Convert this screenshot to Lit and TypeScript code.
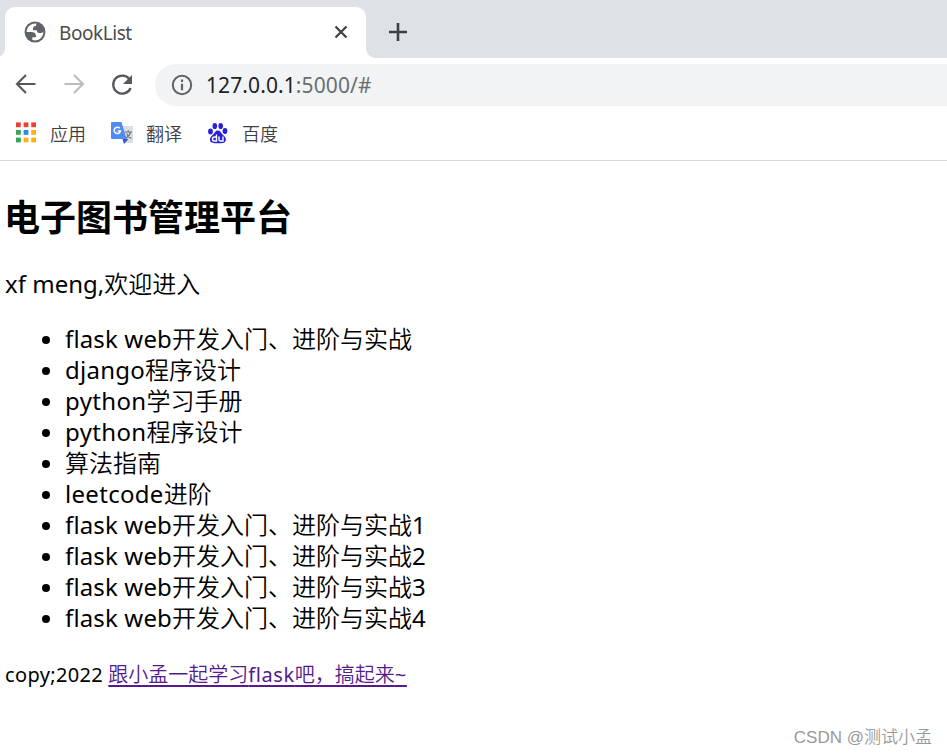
import { LitElement, html, css, svg } from "lit";
import { customElement } from "lit/decorators.js";
import { styleMap } from "lit/directives/style-map.js";

interface Book {
  latin: string;
  tracking: number;
  title: string;
  volume?: string;
}

const series = (volume?: string): Book => ({
  latin: "flask web",
  tracking: 0.15,
  title: "开发入门、进阶与实战",
  volume,
});

const books: Book[] = [
  series(),
  { latin: "django", tracking: 0.25, title: "程序设计" },
  { latin: "python", tracking: 0.35, title: "学习手册" },
  { latin: "python", tracking: 0.35, title: "程序设计" },
  { latin: "", tracking: 0, title: "算法指南" },
  { latin: "leetcode", tracking: 0.3, title: "进阶" },
  series("1"),
  series("2"),
  series("3"),
  series("4"),
];

const appColors = ["#e94235", "#e94235", "#e94235", "#34a853", "#2a8cf0", "#fbb313", "#34a853", "#fbb313", "#fbb313"];

@customElement("browser-chrome")
class BrowserChrome extends LitElement {
  static styles = css`
    :host { display: block; font-family: "Noto Sans", "Noto Sans CJK SC", sans-serif; font-weight: 400; color: #3c4043; }
    svg { display: block; flex: none; }
    .strip { height: 58px; background: #dee1e6; display: flex; align-items: flex-end; box-sizing: border-box; }
    .tab { position: relative; margin-left: 5px; width: 361px; height: 51px; background: #fff; border-radius: 10px 10px 0 0; display: flex; align-items: center; box-sizing: border-box; padding: 0 16px 2px 19px; }
    .tab::before, .tab::after { content: ""; position: absolute; bottom: 0; width: 10px; height: 10px; }
    .tab::before { left: -10px; background: radial-gradient(circle at 0 0, transparent 9.5px, #fff 10.5px); }
    .tab::after { right: -10px; background: radial-gradient(circle at 100% 0, transparent 9.5px, #fff 10.5px); }
    .name { flex: 1; margin-left: 13px; padding-top: 2px; font-size: 19px; letter-spacing: -0.45px; line-height: 24px; color: #4a4d51; }
    .plus { margin: 0 0 17px 22px; }
    .toolbar { height: 54px; display: flex; align-items: center; background: #fff; box-sizing: border-box; padding-left: 14px; }
    .reload { margin-left: 23px; }
    .fwd { margin-left: 24px; }
    .address { flex: 1; margin-left: 20px; height: 42px; background: #f1f3f4; border-radius: 21px 0 0 21px; display: flex; align-items: center; padding-left: 16px; }
    .url { margin-left: 13px; font-size: 21px; line-height: 30px; letter-spacing: 0.1px; color: #202124; white-space: nowrap; }
    .port { color: #6a6e73; }
    .bookmarks { height: 49px; border-bottom: 1px solid #d6d8da; box-sizing: border-box; display: flex; align-items: center; padding: 0 0 6px 15px; font-size: 18px; line-height: 26px; font-weight: 350; }
    .mark { display: flex; align-items: center; height: 42px; }
    .mark svg { margin-bottom: 1px; }
    .mark span { padding-top: 2px; }
    .apps span { margin-left: 13px; }
    .trans { margin-left: 24px; }
    .trans span { margin-left: 12px; }
    .baidu { margin-left: 25px; }
    .baidu span { margin-left: 13px; }
  `;

  render() {
    return html`
      <div class="strip">
        <div class="tab">
          <svg width="22" height="22" viewBox="1.5 1.5 21 21"><circle cx="12" cy="12" r="10" fill="#5f6368"/><path fill="#fff" d="M4 12h4.400c3.407.022 4.922 1.730 4.543 5.127H9.488v2.470a8.004 8.004 0 0 0 10.498-8.083C19.327 12.504 18.332 13 17 13c-2.137 0-3.206-.916-3.206-2.750h-3.748c-.274-2.728.683-4.092 2.870-4.092 0-.975.327-1.597.811-1.970A8.004 8.004 0 0 0 4 12z"/></svg>
          <div class="name">BookList</div>
          <svg width="18" height="18" viewBox="0 0 18 18"><path d="M3.500 3.500l11 11M14.500 3.500l-11 11" stroke="#3c4043" stroke-width="2.200"/></svg>
        </div>
        <svg class="plus" width="20" height="18" viewBox="0 0 20 18"><path d="M10 0v18M1 9h18" stroke="#3c4043" stroke-width="2.600"/></svg>
      </div>
      <div class="toolbar">
        <svg width="24" height="24" viewBox="0 0 24 24" fill="none" stroke="#55585c" stroke-width="2.100"><path d="M21.500 11H3.500M12 2L3 11l9 9"/></svg>
        <svg class="fwd" width="24" height="24" viewBox="0 0 24 24" fill="none" stroke="#babcbe" stroke-width="2.100"><path d="M2.500 11h18M12 2l9 9-9 9"/></svg>
        <svg class="reload" width="26" height="26" viewBox="0 0 26 26"><path d="M20.400 7.200A9 9 0 1 0 21.600 16" fill="none" stroke="#55585c" stroke-width="2.300"/><path d="M23 3v9h-9z" fill="#55585c"/></svg>
        <div class="address">
          <svg width="22" height="22" viewBox="0 0 22 22"><circle cx="11" cy="11" r="9.200" fill="none" stroke="#5f6368" stroke-width="2"/><path d="M11 5.600v2.300M11 9.800v6.500" stroke="#5f6368" stroke-width="2.200"/></svg>
          <div class="url">127.0.0.1<span class="port">:5000/#</span></div>
        </div>
      </div>
      <div class="bookmarks">
        <div class="mark apps">
          <svg width="22" height="22" viewBox="0 0 22 22">${appColors.map(
            (fill, i) => svg`<rect x=${1 + (i % 3) * 7.600} y=${0.4 + Math.floor(i / 3) * 7.600} width="4.800" height="4.800" fill=${fill} />`,
          )}</svg>
          <span>应用</span>
        </div>
        <div class="mark trans">
          <svg width="24" height="24" viewBox="0 0 24 24">
            <path d="M10 5h12q1 0 1 1v15q0 1-1 1h-7z" fill="#dadfe3"/>
            <path d="M12.500 18h6l-4.500 5z" fill="#2f55c6"/>
            <path d="M2 1h9.500l5 17H2q-1 0-1-1V2q0-1 1-1z" fill="#4f8bf3"/>
            <path d="M9.800 7.300A3.200 3.200 0 1 0 10.500 10H7.600" fill="none" stroke="#fff" stroke-width="1.500"/>
            <path d="M14.700 11H22M18.200 9.300V11M20.600 11q-1 4-4.600 6M16.500 12.500q1.700 3.500 5 5" fill="none" stroke="#69757d" stroke-width="1.100"/>
          </svg>
          <span>翻译</span>
        </div>
        <div class="mark baidu">
          <svg width="22" height="22" viewBox="0 0 22 22" fill="#2722d8">
            <ellipse cx="3.500" cy="9.600" rx="2.400" ry="3"/><ellipse cx="7.800" cy="4" rx="2.300" ry="3.100"/>
            <ellipse cx="13.700" cy="4" rx="2.300" ry="3.100"/><ellipse cx="18" cy="9" rx="2.400" ry="3"/>
            <path d="M10.800 8.600c2.300 0 3 2.200 5 4.100 2.500 2.300 3.700 3.700 2.900 6-.8 2.400-3 2.500-7.700 2.500s-7.200-.1-7.900-2.500c-.7-2.300.4-3.700 2.800-6 2-1.900 2.600-4.100 4.900-4.100z"/>
            <path d="M9.500 12.600v6.400H7.200q-1.700 0-1.700-2t1.700-2h2M12 14.500v3q0 1.500 1.500 1.500H16v-4.500" fill="none" stroke="#fff" stroke-width="1.400"/>
          </svg>
          <span>百度</span>
        </div>
      </div>
    `;
  }
}

@customElement("app-root")
class AppRoot extends LitElement {
  static styles = css`
    :host { display: flex; flex-direction: column; height: 755px; overflow: hidden; background: #fff; color: #000; font-family: "Noto Sans", "Noto Sans CJK SC", sans-serif; font-weight: 350; font-variant-ligatures: none; }
    main { padding: 0 5px; flex: 1; }
    h1 { margin: 33px 0 0 -1px; font-size: 36px; line-height: 48px; font-weight: 700; }
    .welcome { margin: 26px 0 0; font-size: 24px; line-height: 31px; }
    .latin { font-weight: 400; }
    .greet { letter-spacing: 0; }
    ul { margin: 24px 0 0; padding: 0; list-style: none; font-size: 24px; }
    li { height: 31px; line-height: 31px; display: flex; align-items: center; white-space: pre; }
    li::before { content: ""; width: 8px; height: 8px; border-radius: 50%; background: #000; margin: 2px 15px 0 37px; }
    .copy { margin: 28px 0 0; font-size: 20px; line-height: 28px; }
    .copy .year { letter-spacing: 0.35px; }
    .copy a { color: #551a8b; text-decoration: underline; text-underline-offset: 3px; text-decoration-thickness: 1.500px; }
    .wide { letter-spacing: 0.6px; }
    footer { align-self: flex-end; margin-right: 15px; font-size: 17px; line-height: 24px; color: #999; padding-bottom: 5px; font-family: "Liberation Sans", "Noto Sans CJK SC", sans-serif; }
  `;

  render() {
    return html`
      <browser-chrome></browser-chrome>
      <main>
        <h1>电子图书管理平台</h1>
        <p class="welcome"><span class="latin greet">xf meng,</span>欢迎进入</p>
        <ul>
          ${books.map(
            (b) => html`<li><span class="latin" style=${styleMap({ letterSpacing: `${b.tracking}px` })}>${b.latin}</span><span>${b.title}</span><span class="latin">${b.volume ?? ""}</span></li>`,
          )}
        </ul>
        <p class="copy"><span class="latin year">copy;2022</span> <a href="#">跟小孟一起学习<span class="latin wide">flask</span>吧，搞起来<span class="latin wide">~</span></a></p>
      </main>
      <footer>CSDN @测试小孟</footer>
    `;
  }
}
